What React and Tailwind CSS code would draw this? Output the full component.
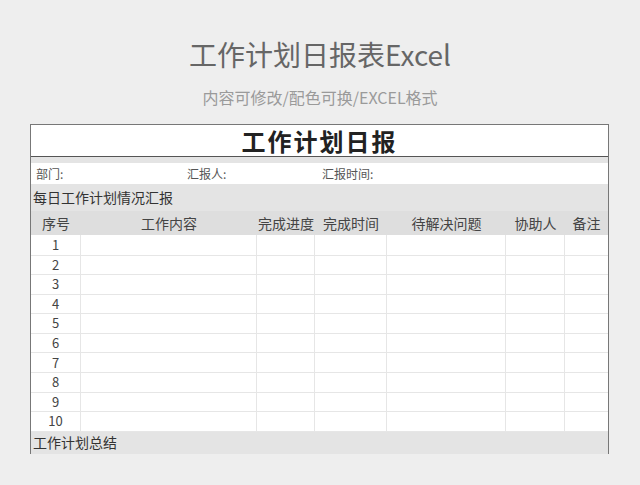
const COLS = ['序号', '工作内容', '完成进度', '完成时间', '待解决问题', '协助人', '备注']
const ROWS = [1, 2, 3, 4, 5, 6, 7, 8, 9, 10]

const grid = 'grid grid-cols-[50px_176px_58px_72px_119px_59px_1fr]'

export default function App() {
  return (
    <div
      className="h-[485px] w-[640px] overflow-hidden bg-[#eeeeee] flex flex-col"
      style={{ fontFamily: '"Noto Sans CJK SC", "Noto Sans", sans-serif' }}
    >
      {/* Page heading */}
      <h1 className="mt-[34px] h-[40px] leading-[40px] text-center text-[28px] text-[#666666]">
        工作计划日报表Excel
      </h1>
      <p className="mt-[11px] h-[24px] leading-[24px] text-center text-[16px] text-[#9a9a9a]">
        内容可修改/配色可换/EXCEL格式
      </p>

      {/* Sheet */}
      <div className="mt-[15px] ml-[30px] w-[579px] border-x border-t border-[#777777]">
        <div className="h-[32px] bg-white border-b border-[#555555] flex items-center justify-center">
          <span className="text-[24px] font-bold tracking-[2px] text-[#222222] leading-none">工作计划日报</span>
        </div>

        <div className="h-[6px] bg-[#e4e4e4]" />

        <div className="h-[21px] bg-white flex items-center text-[12px] text-[#555555]">
          <span className="ml-[5px] w-[151px]">部门:</span>
          <span className="w-[135px]">汇报人:</span>
          <span>汇报时间:</span>
        </div>

        <div className="h-[27px] bg-[#e4e4e4] flex items-center pl-[2px] text-[14px] text-[#333333]">
          每日工作计划情况汇报
        </div>

        <div className={`${grid} h-[24px] bg-[#dedede]`}>
          {COLS.map(c => (
            <div key={c} className="flex items-center justify-center text-[14px] text-[#444444]">
              {c}
            </div>
          ))}
        </div>

        {ROWS.map(n => (
          <div key={n} className={`${grid} h-[19.6px] bg-white`}>
            {COLS.map((c, i) => (
              <div
                key={c}
                className={`border-b border-[#e6e6e6] ${i < COLS.length - 1 ? 'border-r' : ''} flex items-center justify-center text-[13px] text-[#444444]`}
              >
                {i === 0 ? n : ''}
              </div>
            ))}
          </div>
        ))}

        <div className="h-[23px] bg-[#e4e4e4] flex items-center pl-[2px] text-[14px] text-[#333333]">
          工作计划总结
        </div>
      </div>
    </div>
  )
}
